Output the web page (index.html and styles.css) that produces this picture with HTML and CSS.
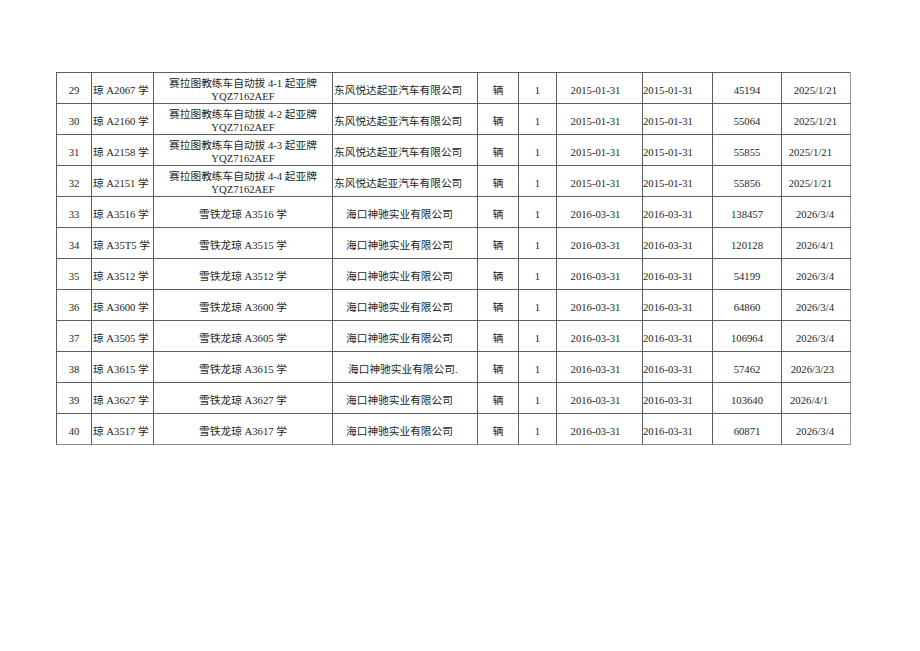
FILE: index.html
```html
<!DOCTYPE html>
<html lang="zh">
<head>
<meta charset="utf-8">
<title>车辆清单</title>
<link rel="stylesheet" href="styles.css">
</head>
<body>
<div class="page">
<table class="grid">
<colgroup>
<col class="c1"><col class="c2"><col class="c3"><col class="c4"><col class="c5"><col class="c6"><col class="c7"><col class="c8"><col class="c9"><col class="c10">
</colgroup>
<tbody>
<tr><td class="num">29</td><td class="plate">琼 A2067 学</td><td class="model two">赛拉图教练车自动拔 4-1 起亚牌<br>YQZ7162AEF</td><td class="co">东风悦达起亚汽车有限公司</td><td class="unit">辆</td><td class="qty">1</td><td class="d1">2015-01-31</td><td class="d2">2015-01-31</td><td class="val">45194</td><td class="exp wide">2025/1/21</td></tr>
<tr><td class="num">30</td><td class="plate">琼 A2160 学</td><td class="model two">赛拉图教练车自动拔 4-2 起亚牌<br>YQZ7162AEF</td><td class="co">东风悦达起亚汽车有限公司</td><td class="unit">辆</td><td class="qty">1</td><td class="d1">2015-01-31</td><td class="d2">2015-01-31</td><td class="val">55064</td><td class="exp wide">2025/1/21</td></tr>
<tr><td class="num">31</td><td class="plate">琼 A2158 学</td><td class="model two">赛拉图教练车自动拔 4-3 起亚牌<br>YQZ7162AEF</td><td class="co">东风悦达起亚汽车有限公司</td><td class="unit">辆</td><td class="qty">1</td><td class="d1">2015-01-31</td><td class="d2">2015-01-31</td><td class="val">55855</td><td class="exp narrow">2025/1/21</td></tr>
<tr><td class="num">32</td><td class="plate">琼 A2151 学</td><td class="model two">赛拉图教练车自动拔 4-4 起亚牌<br>YQZ7162AEF</td><td class="co">东风悦达起亚汽车有限公司</td><td class="unit">辆</td><td class="qty">1</td><td class="d1">2015-01-31</td><td class="d2">2015-01-31</td><td class="val">55856</td><td class="exp narrow">2025/1/21</td></tr>
<tr><td class="num">33</td><td class="plate">琼 A3516 学</td><td class="model">雪铁龙琼 A3516 学</td><td class="co hk">海口神驰实业有限公司</td><td class="unit">辆</td><td class="qty">1</td><td class="d1">2016-03-31</td><td class="d2">2016-03-31</td><td class="val">138457</td><td class="exp">2026/3/4</td></tr>
<tr><td class="num">34</td><td class="plate">琼 A35T5 学</td><td class="model">雪铁龙琼 A3515 学</td><td class="co hk">海口神驰实业有限公司</td><td class="unit">辆</td><td class="qty">1</td><td class="d1">2016-03-31</td><td class="d2">2016-03-31</td><td class="val">120128</td><td class="exp">2026/4/1</td></tr>
<tr><td class="num">35</td><td class="plate">琼 A3512 学</td><td class="model">雪铁龙琼 A3512 学</td><td class="co hk">海口神驰实业有限公司</td><td class="unit">辆</td><td class="qty">1</td><td class="d1">2016-03-31</td><td class="d2">2016-03-31</td><td class="val">54199</td><td class="exp">2026/3/4</td></tr>
<tr><td class="num">36</td><td class="plate">琼 A3600 学</td><td class="model">雪铁龙琼 A3600 学</td><td class="co hk">海口神驰实业有限公司</td><td class="unit">辆</td><td class="qty">1</td><td class="d1">2016-03-31</td><td class="d2">2016-03-31</td><td class="val">64860</td><td class="exp">2026/3/4</td></tr>
<tr><td class="num">37</td><td class="plate">琼 A3505 学</td><td class="model">雪铁龙琼 A3605 学</td><td class="co hk">海口神驰实业有限公司</td><td class="unit">辆</td><td class="qty">1</td><td class="d1">2016-03-31</td><td class="d2">2016-03-31</td><td class="val">106964</td><td class="exp">2026/3/4</td></tr>
<tr><td class="num">38</td><td class="plate">琼 A3615 学</td><td class="model">雪铁龙琼 A3615 学</td><td class="co hk dot">海口神驰实业有限公司.</td><td class="unit">辆</td><td class="qty">1</td><td class="d1">2016-03-31</td><td class="d2">2016-03-31</td><td class="val">57462</td><td class="exp">2026/3/23</td></tr>
<tr><td class="num">39</td><td class="plate">琼 A3627 学</td><td class="model">雪铁龙琼 A3627 学</td><td class="co hk">海口神驰实业有限公司</td><td class="unit">辆</td><td class="qty">1</td><td class="d1">2016-03-31</td><td class="d2">2016-03-31</td><td class="val">103640</td><td class="exp left">2026/4/1</td></tr>
<tr><td class="num">40</td><td class="plate">琼 A3517 学</td><td class="model">雪铁龙琼 A3617 学</td><td class="co hk">海口神驰实业有限公司</td><td class="unit">辆</td><td class="qty">1</td><td class="d1">2016-03-31</td><td class="d2">2016-03-31</td><td class="val">60871</td><td class="exp">2026/3/4</td></tr>
</tbody>
</table>
</div>
</body>
</html>
```

FILE: styles.css
```css
html, body {
  margin: 0;
  padding: 0;
  background: #ffffff;
}

.page {
  padding: 72px 0 0 56px;
}

.grid {
  border-collapse: collapse;
  table-layout: fixed;
  width: 795px;
  font-family: "Liberation Serif", "Noto Sans CJK SC", serif;
  font-size: 10.7px;
  color: #262626;
}

.c1 { width: 35px; }
.c2 { width: 62px; }
.c3 { width: 179px; }
.c4 { width: 145px; }
.c5 { width: 41px; }
.c6 { width: 38px; }
.c7 { width: 86px; }
.c8 { width: 70px; }
.c9 { width: 69px; }
.c10 { width: 69px; }

.grid tr {
  height: 31px;
}

.grid td {
  border: 1px solid #5e5e5e;
  padding: 4px 0 0 0;
  line-height: 13px;
  vertical-align: middle;
  white-space: nowrap;
  overflow: visible;
  text-align: center;
}

.grid td.exp {
  border-left-color: #9a9a9a;
  border-right-color: #9a9a9a;
  text-align: right;
  padding-right: 16px;
}

.grid tr:last-child td {
  border-bottom-color: #8a8a8a;
}

.grid td.plate {
  text-align: left;
  padding-left: 1px;
}

.grid td.co {
  text-align: left;
  padding-left: 1px;
}

.grid td.co.hk {
  padding-left: 13px;
}

.grid td.co.dot {
  padding-left: 15px;
}

.grid td.d1 {
  padding-right: 8px;
}

.grid td.d2 {
  text-align: left;
  padding-left: 0;
}

.grid td.val {
  padding-left: 0;
}

.grid td.exp.wide {
  padding-right: 13px;
}

.grid td.exp.narrow {
  padding-right: 18px;
}

.grid td.exp.left {
  text-align: left;
  padding-left: 8px;
  padding-right: 0;
}

.grid td.model.two {
  line-height: 13px;
  padding-top: 4px;
}
```
